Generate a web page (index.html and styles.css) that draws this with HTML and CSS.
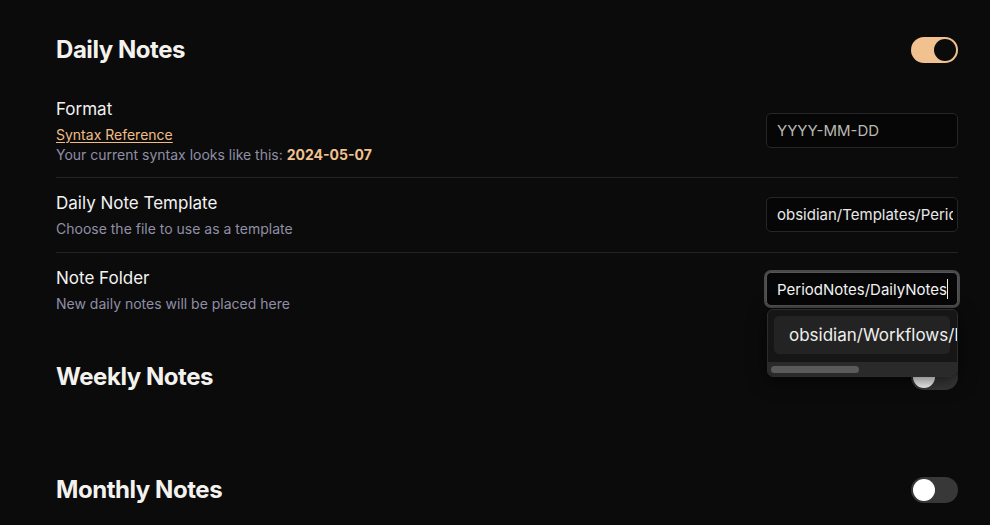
FILE: index.html
```html
<!DOCTYPE html>
<html lang="en">
<head>
<meta charset="utf-8">
<title>Periodic Notes Settings</title>
<link rel="stylesheet" href="styles.css">
</head>
<body>
<div class="settings">
  <section class="section first">
    <div class="section-head">
      <h2 class="section-title">Daily Notes</h2>
      <div class="toggle is-on"><span class="knob"></span></div>
    </div>
    <div class="items">
      <div class="item">
        <div class="info">
          <div class="name">Format</div>
          <div class="desc">
            <a class="link" href="#">Syntax Reference</a><br>
            Your current syntax looks like this: <b class="accent">2024-05-07</b>
          </div>
        </div>
        <div class="control">
          <input class="text-input" type="text" placeholder="YYYY-MM-DD">
        </div>
      </div>
      <div class="item">
        <div class="info">
          <div class="name">Daily Note Template</div>
          <div class="desc">Choose the file to use as a template</div>
        </div>
        <div class="control">
          <input class="text-input" type="text" value="obsidian/Templates/PeriodicNotes/Daily.md">
        </div>
      </div>
      <div class="item last">
        <div class="info">
          <div class="name">Note Folder</div>
          <div class="desc">New daily notes will be placed here</div>
        </div>
        <div class="control">
          <div class="text-input focused"><span class="value">PeriodNotes/DailyNotes</span><span class="caret"></span></div>
          <div class="suggest">
            <div class="suggest-list">
              <div class="suggest-item"><span class="suggest-text">obsidian/Workflows/PeriodNotes</span></div>
            </div>
            <div class="scroll-track"><div class="scroll-thumb"></div></div>
          </div>
        </div>
      </div>
    </div>
  </section>
  <section class="section collapsed">
    <div class="section-head">
      <h2 class="section-title">Weekly Notes</h2>
      <div class="toggle"><span class="knob"></span></div>
    </div>
  </section>
  <section class="section">
    <div class="section-head">
      <h2 class="section-title">Monthly Notes</h2>
      <div class="toggle"><span class="knob"></span></div>
    </div>
  </section>
</div>
</body>
</html>
```

FILE: styles.css
```css
* { box-sizing: border-box; }
html, body {
  margin: 0;
  background: #0b0b0b;
  height: 100%;
  overflow: hidden;
}
body {
  font-family: Inter, "Noto Sans", "Liberation Sans", sans-serif;
  color: #ececec;
}
.settings {
  padding: 0 32px 0 56px;
}
.section {
  padding-top: 24px;
}
.section.first {
  padding-top: 25px;
}
.section.collapsed {
  padding-top: 26px;
  padding-bottom: 40px;
}
.section-head {
  height: 49px;
  display: flex;
  align-items: center;
  justify-content: space-between;
}
.section-title {
  margin: 0;
  font-size: 24px;
  font-weight: 700;
  letter-spacing: -0.45px;
  color: #f4f2ee;
}
.toggle {
  width: 47px;
  height: 26px;
  border-radius: 13px;
  background: #383838;
  padding: 2px;
  display: flex;
  justify-content: flex-start;
}
.toggle .knob {
  width: 22px;
  height: 22px;
  border-radius: 50%;
  background: #ffffff;
}
.toggle.is-on {
  background: #f1c28f;
  justify-content: flex-end;
}
.toggle.is-on .knob {
  background: #0b0b0b;
}
.items {
  margin-top: 10px;
}
.item {
  display: flex;
  align-items: center;
  justify-content: space-between;
  padding: 13px 0;
  border-bottom: 1px solid #232323;
}
.item.last {
  border-bottom: none;
}
.name {
  font-size: 17px;
  line-height: 24px;
  color: #f2f2f2;
}
.desc {
  margin-top: 4px;
  font-size: 14px;
  line-height: 19.5px;
  color: #8f8fa6;
}
.link {
  color: #efbd88;
  text-decoration: underline;
  text-underline-offset: 2px;
}
.accent {
  color: #f1c28f;
  font-weight: 700;
}
.control {
  position: relative;
}
.text-input {
  display: block;
  width: 192px;
  height: 35px;
  margin: 0;
  padding: 0 4px 0 10px;
  background: #060606;
  border: 1px solid #262626;
  border-radius: 5px;
  font-family: inherit;
  font-size: 15px;
  color: #e8e8e8;
  outline: none;
}
.text-input::placeholder {
  color: #b9b8b2;
}
.text-input.focused {
  height: 34px;
  display: flex;
  align-items: center;
  white-space: nowrap;
  overflow: hidden;
  border-color: #555555;
  box-shadow: 0 0 0 2px #4a4a4a;
  color: #f2f2f2;
}
.caret {
  display: inline-block;
  width: 1px;
  height: 20px;
  background: #f2f2f2;
  flex: none;
}
.suggest {
  position: absolute;
  top: 37px;
  left: 1px;
  width: 191px;
  height: 68px;
  background: #161616;
  border: 1px solid #2c2c2c;
  border-radius: 6px;
  overflow: hidden;
  box-shadow: 0 4px 18px rgba(0, 0, 0, 0.6);
  display: flex;
  flex-direction: column;
}
.suggest-list {
  flex: 1;
  padding: 6px 0 0 6px;
  overflow: hidden;
}
.suggest-item {
  width: 176px;
  height: 38px;
  background: #232323;
  border-radius: 5px;
  padding-left: 15px;
  display: flex;
  align-items: center;
  font-size: 17px;
  color: #efefef;
  white-space: nowrap;
}
.suggest-text {
  flex: none;
}
.scroll-track {
  height: 14px;
  background: #2a2a2a;
  padding: 4px 0 0 3px;
}
.scroll-thumb {
  width: 88px;
  height: 7px;
  border-radius: 4px;
  background: #5a5a5a;
}
```
